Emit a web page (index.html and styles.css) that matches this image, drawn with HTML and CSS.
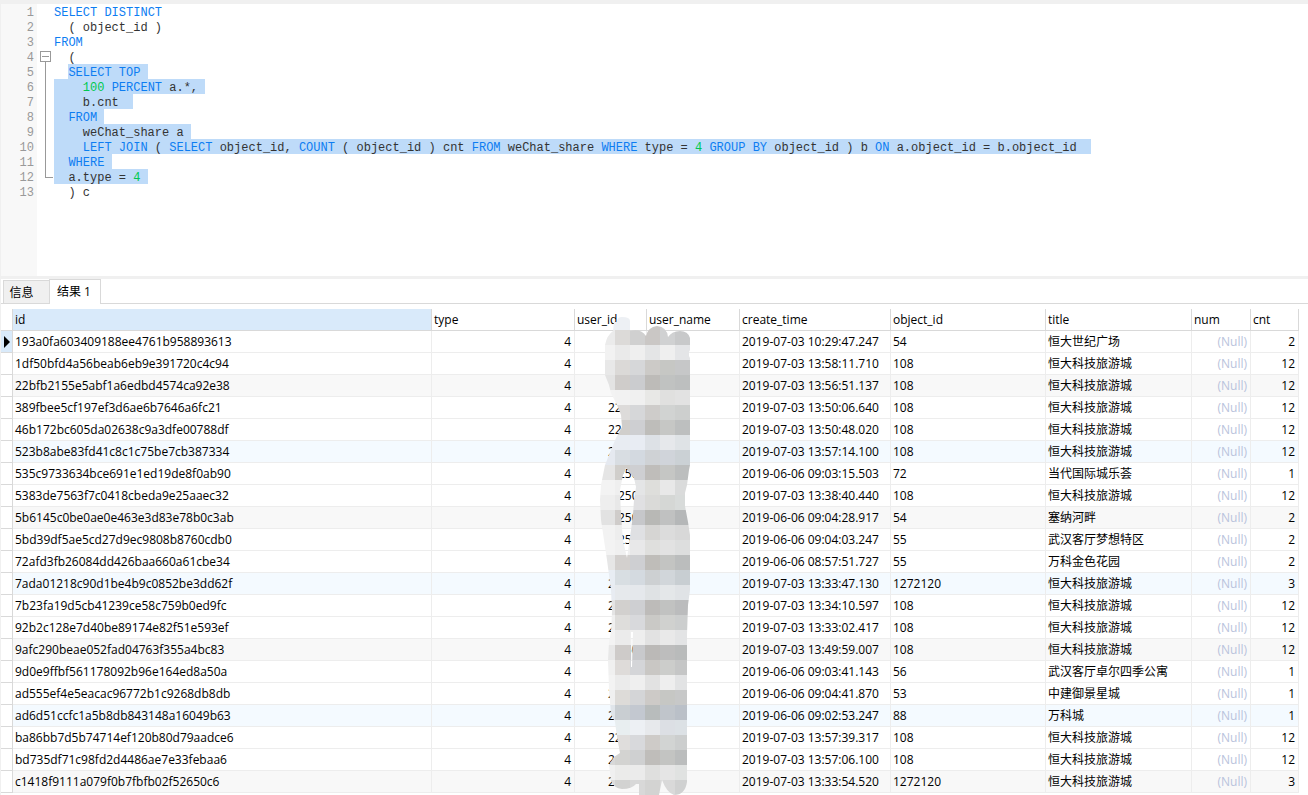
FILE: index.html
```
<!DOCTYPE html>
<html lang="zh-CN">
<head>
    <meta charset="UTF-8">
    <meta name="viewport" content="width=device-width, initial-scale=1.0">
    <title>SQL Query</title>
    <link rel="stylesheet" href="styles.css">
</head>
<body>
    <div class="editor">
        <div class="line"><span class="num">1</span><span class="fold"></span><code><b>SELECT</b> <b>DISTINCT</b></code></div>
        <div class="line"><span class="num">2</span><span class="fold"></span><code>  ( object_id )</code></div>
        <div class="line"><span class="num">3</span><span class="fold"></span><code><b>FROM</b></code></div>
        <div class="line"><span class="num">4</span><span class="fold start"><button type="button" class="fold-toggle" aria-label="Collapse"></button></span><code>  (</code></div>
        <div class="line"><span class="num">5</span><span class="fold bar"></span><code>  <mark><b>SELECT</b> <b>TOP</b> </mark></code></div>
        <div class="line"><span class="num">6</span><span class="fold bar"></span><code><mark>    <i>100</i> <b>PERCENT</b> a.*, </mark></code></div>
        <div class="line"><span class="num">7</span><span class="fold bar"></span><code><mark>    b.cnt  </mark></code></div>
        <div class="line"><span class="num">8</span><span class="fold bar"></span><code><mark>  <b>FROM</b> </mark></code></div>
        <div class="line"><span class="num">9</span><span class="fold bar"></span><code><mark>    weChat_share a </mark></code></div>
        <div class="line"><span class="num">10</span><span class="fold bar"></span><code><mark>    <b>LEFT</b> <b>JOIN</b> ( <b>SELECT</b> object_id, <b>COUNT</b> ( object_id ) cnt <b>FROM</b> weChat_share <b>WHERE</b> type = <i>4</i> <b>GROUP</b> <b>BY</b> object_id ) b <b>ON</b> a.object_id = b.object_id  </mark></code></div>
        <div class="line"><span class="num">11</span><span class="fold bar"></span><code><mark>  <b>WHERE</b> </mark></code></div>
        <div class="line"><span class="num">12</span><span class="fold bar end"></span><code><mark>  a.type = <i>4</i> </mark></code></div>
        <div class="line"><span class="num">13</span><span class="fold"></span><code>  ) c</code></div>
    </div>

    <div class="tabs">
        <button type="button" class="tab">信息</button>
        <button type="button" class="tab active">结果 1</button>
    </div>

    <div class="results">
        <table>
            <colgroup>
                <col class="c-mark"><col class="c-id"><col class="c-type"><col class="c-uid"><col class="c-uname">
                <col class="c-time"><col class="c-oid"><col class="c-title"><col class="c-num"><col class="c-cnt">
            </colgroup>
            <thead>
                <tr>
                    <th></th><th class="selected">id</th><th>type</th><th>user_id</th><th>user_name</th>
                    <th>create_time</th><th>object_id</th><th>title</th><th>num</th><th>cnt</th>
                </tr>
            </thead>
            <tbody id="rows"></tbody>
        </table>
        <svg class="mosaic" id="mosaic" width="90" height="480" viewBox="600 315 90 480" shape-rendering="crispEdges" aria-hidden="true">
            <clipPath id="smear">
                <path clip-rule="evenodd" d="M613 331 L614 322 H617 Q617 317 622 317 Q630 317 630 321 V331 Q641 328 646 336 Q648 327 657 326 Q667 327 668 337 Q672 331 680 331 Q688 331 690 338 V350 L689 352 V356 L690 358 V465 L689 470 L687 485 L685 493 V506 L688 522 L690 535 V590 L688 605 L687 635 V782 Q685 795 674 795 Q667 793 662 780 L659 795 H639 V784 H636 Q632 789 622 789 Q614 788 611 781 L609 765 L614 757 L620 753 L617 737 L615 722 L611 714 L609 690 L608 660 L609 642 L611 632 L612 612 L611 590 L607 560 L604 540 L601 520 L600 500 L601 485 L605 465 L611 450 L616 438 L622 427 L621 415 L617 405 L611 393 L609 385 L605 375 V345 Q607 335 613 331 Z
                M626 468 L634 478 L636 487 L634 500 L633 515 L631 530 L627 558 L623 540 L621 515 L620 490 L623 475 Z
                M631 632 H633 L632 667 H631 Z"/>
            </clipPath>
            <g id="cells" clip-path="url(#smear)"></g>
        </svg>
    </div>

    <script>
        const HD = '恒大科技旅游城';
        // id, user_id, create_time, object_id, title, cnt
        const data = [
            ['193a0fa603409188ee4761b958893613', '', '2019-07-03 10:29:47.247', '54', '恒大世纪广场', 2],
            ['1df50bfd4a56beab6eb9e391720c4c94', '', '2019-07-03 13:58:11.710', '108', HD, 12],
            ['22bfb2155e5abf1a6edbd4574ca92e38', '', '2019-07-03 13:56:51.137', '108', HD, 12],
            ['389fbee5cf197ef3d6ae6b7646a6fc21', '22', '2019-07-03 13:50:06.640', '108', HD, 12],
            ['46b172bc605da02638c9a3dfe00788df', '22', '2019-07-03 13:50:48.020', '108', HD, 12],
            ['523b8abe83fd41c8c1c75be7cb387334', '2', '2019-07-03 13:57:14.100', '108', HD, 12],
            ['535c9733634bce691e1ed19de8f0ab90', '250', '2019-06-06 09:03:15.503', '72', '当代国际城乐荟', 1],
            ['5383de7563f7c0418cbeda9e25aaec32', '250', '2019-07-03 13:38:40.440', '108', HD, 12],
            ['5b6145c0be0ae0e463e3d83e78b0c3ab', '250', '2019-06-06 09:04:28.917', '54', '塞纳河畔', 2],
            ['5bd39df5ae5cd27d9ec9808b8760cdb0', '250', '2019-06-06 09:04:03.247', '55', '武汉客厅梦想特区', 2],
            ['72afd3fb26084dd426baa660a61cbe34', '', '2019-06-06 08:57:51.727', '55', '万科金色花园', 2],
            ['7ada01218c90d1be4b9c0852be3dd62f', '2', '2019-07-03 13:33:47.130', '1272120', HD, 3],
            ['7b23fa19d5cb41239ce58c759b0ed9fc', '2', '2019-07-03 13:34:10.597', '108', HD, 12],
            ['92b2c128e7d40be89174e82f51e593ef', '2', '2019-07-03 13:33:02.417', '108', HD, 12],
            ['9afc290beae052fad04763f355a4bc83', '250', '2019-07-03 13:49:59.007', '108', HD, 12],
            ['9d0e9ffbf561178092b96e164ed8a50a', '', '2019-06-06 09:03:41.143', '56', '武汉客厅卓尔四季公寓', 1],
            ['ad555ef4e5eacac96772b1c9268db8db', '2', '2019-06-06 09:04:41.870', '53', '中建御景星城', 1],
            ['ad6d51ccfc1a5b8db843148a16049b63', '2', '2019-06-06 09:02:53.247', '88', '万科城', 1],
            ['ba86bb7d5b74714ef120b80d79aadce6', '22', '2019-07-03 13:57:39.317', '108', HD, 12],
            ['bd735df71c98fd2d4486ae7e33febaa6', '2', '2019-07-03 13:57:06.100', '108', HD, 12],
            ['c1418f9111a079f0b7fbfb02f52650c6', '2', '2019-07-03 13:33:54.520', '1272120', HD, 3]
        ];

        document.getElementById('rows').innerHTML = data.map((r, i) => `
            <tr>
                <td class="${i === 0 ? 'current' : ''}"></td><td>${r[0]}</td><td class="right">4</td>
                <td class="uid ${r[1].length > 2 ? 'far' : ''}">${r[1]}</td><td></td><td>${r[2]}</td><td>${r[3]}</td>
                <td class="title">${r[4]}</td><td class="right null">(Null)</td><td class="right">${r[5]}</td>
            </tr>`).join('');

        // one row of 15px blocks per line
        const blocks = [
            'edf0f4 edf0f4 edf0f4 cac7c5 d0d1d2 c8c9ca',
            'ebebeb dcdad8 d0d0d0 cac7c5 d0d1d2 c8c9ca',
            'f2f2f2 eaeaea efefef e4e5e6 efefef e4e5e7',
            'e8e8e8 dbd9d7 d6d7d9 cccac7 c6c7c4 c6c7c8',
            'e3e3e3 cfccca cbcccf bdbbb8 c0c2c1 bdbfbf',
            'f3f3f3 f2f2f2 f0f0f0 e8e8e6 e0e0df e2e2e2',
            'dddbda dddbda d6d7d9 ceccca d1d3d2 cdcfce',
            'd0cecb d0cecb cecfd2 bebdba c6c7c5 bdbfbf',
            'e9ecf2 e8ecf2 e8ecf3 dde1e6 e6e8eb dfe3e6',
            'e5e9f0 d8dde2 d3d9e0 cfd2d5 d0d4da cbd1d5',
            'e5e5e5 d0cecb cecfd2 bfbdba c5c6c4 bcbebe',
            'f3f3f3 efefef e4e5e6 dededb e8e8e8 dadbdb',
            'eeeeee e8e8e8 e0e0e2 dadad8 d5d7d5 d8dbda',
            'e2e2e2 cfccca c6c7ca b8b8b5 c0c1c1 b5b7b8',
            'f2f2f2 ededed dfe0e3 d6d5d3 dcdcdc d8d8d8',
            'f3f3f3 f0f0f0 e8e8e9 dfdfdd e2e2e2 dddede',
            'e6e6e6 d3d0ce cecfd2 bfbdb9 c3c4c2 bbbdbd',
            'e8edf3 d8dee2 d4dae0 cdd0d2 d1d6da c8ced2',
            'e8ecf2 e6e9ec e5e8ec dfe2e4 e4e7e9 e0e3e6',
            'e4e4e4 d2d0ce cecfd2 bdbbb9 c1c2c1 bbbcbd',
            'f0f0f0 dedddb d8d9dc cac9c6 d0d1cf cccece',
            'f3f3f3 ebebeb eeeeee e2e2e2 e9e9e9 e3e4e5',
            'e8e8e8 cecbc9 c8c9cc bbb9b7 bdbdbd b9bbbb',
            'f0f0f0 dedbd9 d4d5d8 c9c7c4 cccdcb c5c6c6',
            'f3f3f3 ebebeb efefef e2e2e2 eeeeee e2e3e4',
            'f0f0f0 dddbd8 d4d5d7 cdcac7 c6c7c4 c7c8c8',
            'e0e5ea c9ced2 c3c8d0 b8bcbc c0c5cb bac0c8',
            'f0f2f5 e8eef0 edf0f4 e7e9ec dcdfe4 dce1e5',
            'dfdddc dfdddc d8d9dc cecbc8 d2d4d3 cccece',
            'd8d8d8 d3d3d1 cfd0d1 bfbdba c3c4c2 bbbdbd',
            'f0f0f0 ebebea ebebeb dfdfde e5e5e5 e0e2e1',
            'dddddd d2d2d1 d8d8d8 d3d3d2 d9d9d9 d0d1d1'
        ];

        document.getElementById('cells').innerHTML = blocks.map((row, y) =>
            row.split(' ').map((c, x) =>
                `<rect x="${600 + x * 15}" y="${315 + y * 15}" width="15" height="15" fill="#${c}"/>`
            ).join('')).join('');
    </script>
</body>
</html>
```
FILE: styles.css
```
* {
    box-sizing: border-box;
}
body {
    margin: 0;
    background: #fff;
    color: #000;
    font-family: "Open Sans", "Noto Sans CJK SC", sans-serif;
    font-size: 12px;
    border-left: 1px solid #f0f0f0;
    height: 100vh;
    overflow: hidden;
}
button {
    font: inherit;
    color: inherit;
    padding: 0;
    margin: 0;
}

/* editor */
.editor {
    height: 279px;
    border-top: 4px solid #f0f0f0;
    border-bottom: 3px solid #f0f0f0;
    background: linear-gradient(to right, #f8f8f8 36px, #fff 36px);
    font-family: "Liberation Mono", monospace;
    font-size: 12px;
    line-height: 18px;
    color: #333;
    overflow: hidden;
}
.line {
    display: flex;
    height: 15px;
}
.num {
    width: 36px;
    padding-right: 3px;
    text-align: right;
    color: #999;
}
.fold {
    width: 17px;
}
.fold.start {
    padding: 2px 0 0 3px;
}
.fold-toggle {
    display: block;
    width: 11px;
    height: 11px;
    border: 1px solid #999;
    background: linear-gradient(#999, #999) center / 7px 1px no-repeat #fff;
}
.fold.start::after {
    content: "";
    display: block;
    width: 1px;
    height: 2px;
    margin-left: 5px;
    background: #999;
}
.fold.bar::before {
    content: "";
    display: block;
    width: 7px;
    height: 15px;
    margin-left: 8px;
    border-left: 1px solid #999;
}
.fold.end::before {
    height: 8px;
    border-bottom: 1px solid #999;
}
code {
    font: inherit;
    white-space: pre;
}
code b {
    font-weight: normal;
    color: #0d7df2;
}
code i {
    font-style: normal;
    color: #00c850;
}
mark {
    display: inline-block;
    height: 15px;
    background: #bedbf9;
    color: inherit;
}

/* tabs */
.tabs {
    display: flex;
    align-items: flex-end;
    height: 25px;
    padding-left: 2px;
    border-bottom: 1px solid #d9d9d9;
}
.tab {
    width: 46px;
    height: 23px;
    padding-right: 10px;
    border: 1px solid #d9d9d9;
    border-width: 1px 0 0 1px;
    background: #f0f0f0;
}
.tab.active {
    width: 52px;
    height: 25px;
    padding: 0 2px 2px 0;
    margin-bottom: -1px;
    border-width: 1px 1px 0 1px;
    background: #fff;
}

/* result grid */
.results {
    position: relative;
    padding-top: 5px;
}
table {
    table-layout: fixed;
    width: 1298px;
    border-collapse: separate;
    border-spacing: 0;
}
.c-mark { width: 12px; }
.c-id { width: 419px; }
.c-type { width: 143px; }
.c-uid { width: 72px; }
.c-uname { width: 93px; }
.c-time { width: 151px; }
.c-oid { width: 155px; }
.c-title { width: 146px; }
.c-num { width: 59px; }
.c-cnt { width: 48px; }
th, td {
    height: 22px;
    padding: 0 2px;
    line-height: 20px;
    text-align: left;
    font-weight: normal;
    white-space: nowrap;
    overflow: hidden;
    border-right: 1px solid #ededed;
    border-bottom: 1px solid #ededed;
}
th {
    border-color: #d9d9d9;
}
th.selected {
    background: #d9eafa;
}
tbody tr:nth-child(6n+3) {
    background: #f8f8f8;
}
tbody tr:nth-child(6n) {
    background: #f4faff;
}
th:first-child, td:first-child {
    padding: 0;
    background: #fff;
    border-color: #d9d9d9;
}
td.current:first-child {
    background: #d9eafa;
}
td.current::before {
    content: "";
    display: block;
    width: 0;
    margin-left: 3px;
    border: 6px solid transparent;
    border-left-color: #000;
    border-right-width: 0;
}
.right {
    text-align: right;
    padding-right: 3px;
}
.null {
    color: #b9c3dc;
}
.uid {
    padding-left: 33px;
}
.uid.far {
    padding-left: 43px;
}
.mosaic {
    position: absolute;
    left: 599px;
    top: 11px;
}
```
